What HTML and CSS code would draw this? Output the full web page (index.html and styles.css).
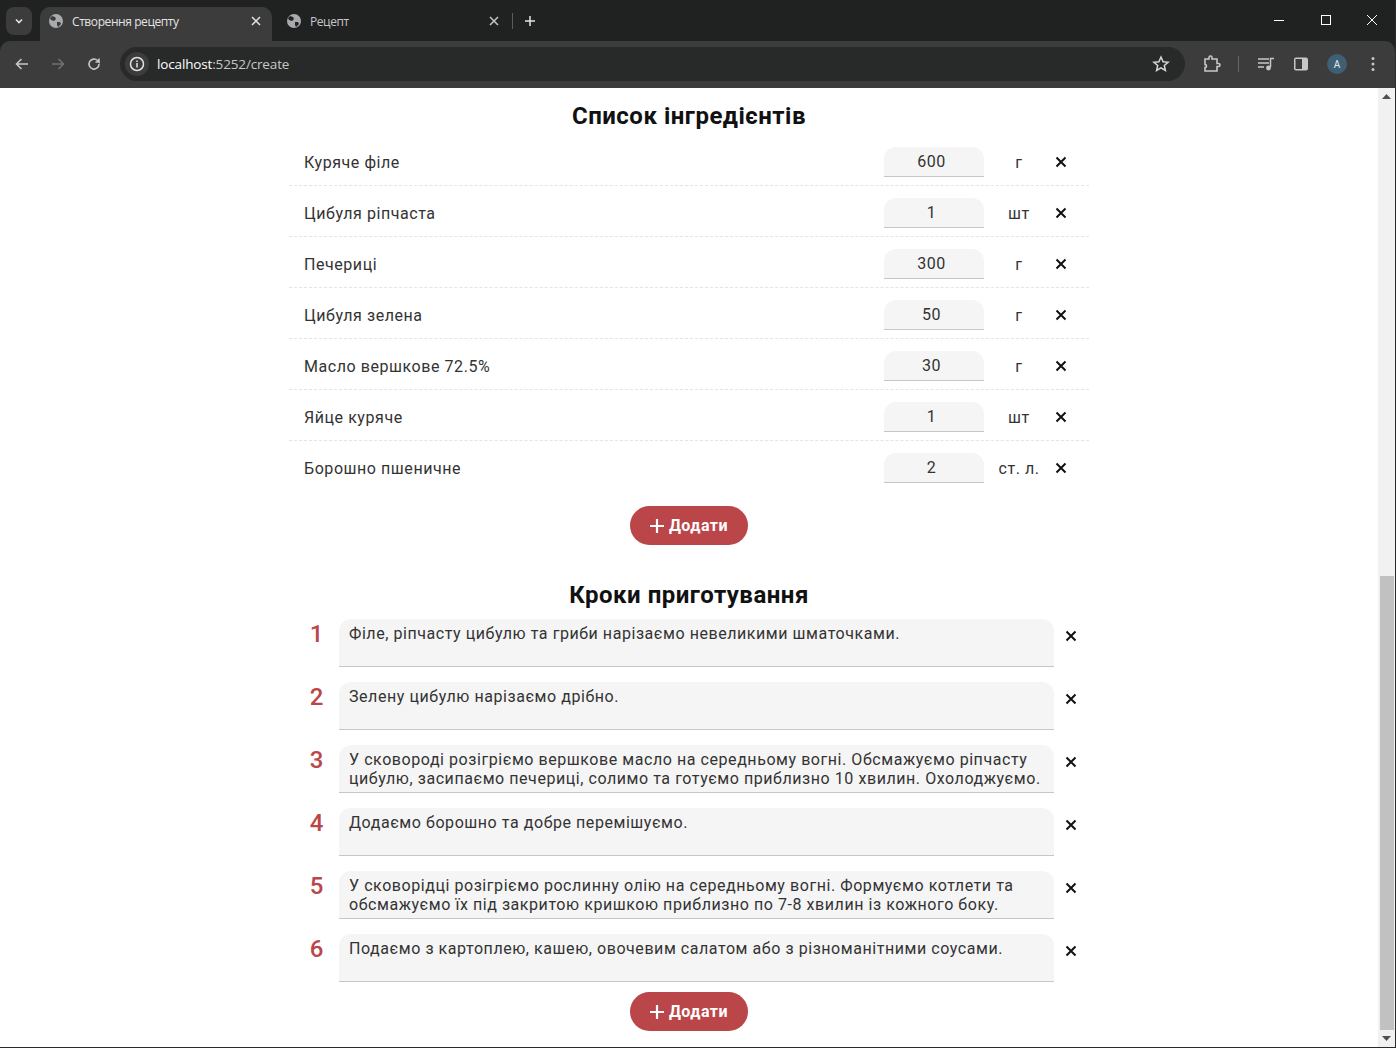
FILE: index.html
```html
<!DOCTYPE html>
<html lang="uk">
<head>
<meta charset="utf-8">
<title>Створення рецепту</title>
<link rel="stylesheet" href="styles.css">
</head>
<body>
<header class="chrome">
  <div class="tabstrip">
    <div class="tabsearch"><svg width="12" height="12" viewBox="0 0 12 12"><path d="M3 4.500l3 3 3-3" fill="none" stroke="#e3e3e3" stroke-width="1.600"/></svg></div>
    <div class="tab tab-active">
      <svg class="globe" width="16" height="16" viewBox="0 0 16 16"><circle cx="8" cy="8" r="7" fill="#a8abae"/><path d="M4 3l3 1 1 2-2 2-3-1-1-2zM9 9l3 0 1 2-3 3-1-2z" fill="#3c3c3c"/></svg>
      <span class="tab-title">Створення рецепту</span>
      <svg class="tab-x" width="10" height="10" viewBox="0 0 10 10"><path d="M1 1l8 8M9 1l-8 8" stroke="#e3e3e3" stroke-width="1.500"/></svg>
    </div>
    <div class="tab tab-idle">
      <svg class="globe" width="16" height="16" viewBox="0 0 16 16"><circle cx="8" cy="8" r="7" fill="#a8abae"/><path d="M4 3l3 1 1 2-2 2-3-1-1-2zM9 9l3 0 1 2-3 3-1-2z" fill="#212323"/></svg>
      <span class="tab-title">Рецепт</span>
      <svg class="tab-x" width="10" height="10" viewBox="0 0 10 10"><path d="M1 1l8 8M9 1l-8 8" stroke="#c4c7c5" stroke-width="1.500"/></svg>
    </div>
    <span class="tab-sep"></span>
    <svg class="newtab" width="12" height="12" viewBox="0 0 12 12"><path d="M6 1v10M1 6h10" stroke="#e3e3e3" stroke-width="1.500"/></svg>
    <div class="winctl">
      <svg width="12" height="12" viewBox="0 0 12 12"><path d="M1 6.500h10" stroke="#fff"/></svg>
      <svg width="12" height="12" viewBox="0 0 12 12"><rect x="1.500" y="1.500" width="9" height="9" fill="none" stroke="#fff"/></svg>
      <svg width="12" height="12" viewBox="0 0 12 12"><path d="M1 1l10 10M11 1L1 11" stroke="#fff"/></svg>
    </div>
  </div>
  <div class="toolbar">
    <svg width="16" height="16" viewBox="0 0 16 16"><path d="M14 8H3M7.500 3L2.500 8l5 5" fill="none" stroke="#c7c7c7" stroke-width="1.600"/></svg>
    <svg width="16" height="16" viewBox="0 0 16 16"><path d="M2 8h11M8.500 3l5 5-5 5" fill="none" stroke="#6f7071" stroke-width="1.600"/></svg>
    <svg width="16" height="16" viewBox="0 0 16 16"><path d="M13 8a5 5 0 1 1-1.500-3.500L13 6V2.500M13 6H9.500" fill="none" stroke="#c7c7c7" stroke-width="1.600"/></svg>
    <div class="omnibox">
      <span class="site-info"><svg width="16" height="16" viewBox="0 0 16 16"><circle cx="8" cy="8" r="6.500" fill="none" stroke="#e3e3e3" stroke-width="1.500"/><path d="M8 7v4.500M8 4.500v1.500" stroke="#e3e3e3" stroke-width="1.500"/></svg></span>
      <span class="url"><span class="url-host">localhost</span>:5252/create</span>
      <svg class="star" width="18" height="18" viewBox="0 0 18 18"><path d="M9 2l2.100 4.700 5 .5-3.800 3.300 1.100 5L9 12.900 4.600 15.500l1.100-5L1.900 7.200l5-.5z" fill="none" stroke="#d5d5d5" stroke-width="1.500"/></svg>
    </div>
    <svg class="tb-ext" width="18" height="18" viewBox="0 0 18 18"><path d="M2 4h4V2.500a1.500 1.500 0 0 1 3 0V4h5v4.500h1.500a1.500 1.500 0 0 1 0 3H14V16H2v-3.500a1.500 1.500 0 0 0 0-3V4z" fill="none" stroke="#c7c7c7" stroke-width="1.600"/></svg>
    <span class="tb-sep"></span>
    <svg class="tb-media" width="18" height="14" viewBox="0 0 18 14"><path d="M1 2h11M1 6h11M1 10h6" stroke="#c7c7c7" stroke-width="1.500"/><path d="M13.500 10V1.500H17" fill="none" stroke="#c7c7c7" stroke-width="1.500"/><circle cx="11.500" cy="11" r="2.400" fill="#c7c7c7"/></svg>
    <svg class="tb-panel" width="16" height="16" viewBox="0 0 16 16"><rect x="1" y="1.500" width="14" height="13" rx="2" fill="#c7c7c7"/><rect x="2.500" y="3" width="6.500" height="10" fill="#3c3c3c"/></svg>
    <span class="avatar">A</span>
    <svg class="tb-menu" width="4" height="16" viewBox="0 0 4 16"><circle cx="2" cy="2.500" r="1.500" fill="#c7c7c7"/><circle cx="2" cy="8" r="1.500" fill="#c7c7c7"/><circle cx="2" cy="13.500" r="1.500" fill="#c7c7c7"/></svg>
  </div>
</header>

<div class="viewport">
  <main class="page">
    <section class="ingredients">
      <h2 class="section-title">Список інгредієнтів</h2>
      <ul class="ing-list">
        <li class="ing-row"><span class="ing-name">Куряче філе</span><span class="qty">600</span><span class="unit">г</span><svg class="remove" width="12" height="12" viewBox="0 0 12 12"><path d="M1.500 1.500l9 9M10.500 1.500l-9 9"/></svg></li>
        <li class="ing-row"><span class="ing-name">Цибуля ріпчаста</span><span class="qty">1</span><span class="unit">шт</span><svg class="remove" width="12" height="12" viewBox="0 0 12 12"><path d="M1.500 1.500l9 9M10.500 1.500l-9 9"/></svg></li>
        <li class="ing-row"><span class="ing-name">Печериці</span><span class="qty">300</span><span class="unit">г</span><svg class="remove" width="12" height="12" viewBox="0 0 12 12"><path d="M1.500 1.500l9 9M10.500 1.500l-9 9"/></svg></li>
        <li class="ing-row"><span class="ing-name">Цибуля зелена</span><span class="qty">50</span><span class="unit">г</span><svg class="remove" width="12" height="12" viewBox="0 0 12 12"><path d="M1.500 1.500l9 9M10.500 1.500l-9 9"/></svg></li>
        <li class="ing-row"><span class="ing-name">Масло вершкове 72.5%</span><span class="qty">30</span><span class="unit">г</span><svg class="remove" width="12" height="12" viewBox="0 0 12 12"><path d="M1.500 1.500l9 9M10.500 1.500l-9 9"/></svg></li>
        <li class="ing-row"><span class="ing-name">Яйце куряче</span><span class="qty">1</span><span class="unit">шт</span><svg class="remove" width="12" height="12" viewBox="0 0 12 12"><path d="M1.500 1.500l9 9M10.500 1.500l-9 9"/></svg></li>
        <li class="ing-row ing-last"><span class="ing-name">Борошно пшеничне</span><span class="qty">2</span><span class="unit">ст. л.</span><svg class="remove" width="12" height="12" viewBox="0 0 12 12"><path d="M1.500 1.500l9 9M10.500 1.500l-9 9"/></svg></li>
      </ul>
      <button class="add-btn"><svg width="14" height="14" viewBox="0 0 14 14"><path d="M7 0v14M0 7h14" stroke="#fff" stroke-width="2.200"/></svg>Додати</button>
    </section>

    <section class="steps">
      <h2 class="section-title">Кроки приготування</h2>
      <ol class="step-list">
        <li class="step"><span class="step-num">1</span><div class="step-text">Філе, ріпчасту цибулю та гриби нарізаємо невеликими шматочками.</div><svg class="remove" width="12" height="12" viewBox="0 0 12 12"><path d="M1.500 1.500l9 9M10.500 1.500l-9 9"/></svg></li>
        <li class="step"><span class="step-num">2</span><div class="step-text">Зелену цибулю нарізаємо дрібно.</div><svg class="remove" width="12" height="12" viewBox="0 0 12 12"><path d="M1.500 1.500l9 9M10.500 1.500l-9 9"/></svg></li>
        <li class="step"><span class="step-num">3</span><div class="step-text">У сковороді розігріємо вершкове масло на середньому вогні. Обсмажуємо ріпчасту цибулю, засипаємо печериці, солимо та готуємо приблизно 10 хвилин. Охолоджуємо.</div><svg class="remove" width="12" height="12" viewBox="0 0 12 12"><path d="M1.500 1.500l9 9M10.500 1.500l-9 9"/></svg></li>
        <li class="step"><span class="step-num">4</span><div class="step-text">Додаємо борошно та добре перемішуємо.</div><svg class="remove" width="12" height="12" viewBox="0 0 12 12"><path d="M1.500 1.500l9 9M10.500 1.500l-9 9"/></svg></li>
        <li class="step"><span class="step-num">5</span><div class="step-text">У сковорідці розігріємо рослинну олію на середньому вогні. Формуємо котлети та обсмажуємо їх під закритою кришкою приблизно по 7-8 хвилин із кожного боку.</div><svg class="remove" width="12" height="12" viewBox="0 0 12 12"><path d="M1.500 1.500l9 9M10.500 1.500l-9 9"/></svg></li>
        <li class="step"><span class="step-num">6</span><div class="step-text">Подаємо з картоплею, кашею, овочевим салатом або з різноманітними соусами.</div><svg class="remove" width="12" height="12" viewBox="0 0 12 12"><path d="M1.500 1.500l9 9M10.500 1.500l-9 9"/></svg></li>
      </ol>
      <button class="add-btn"><svg width="14" height="14" viewBox="0 0 14 14"><path d="M7 0v14M0 7h14" stroke="#fff" stroke-width="2.200"/></svg>Додати</button>
    </section>
  </main>
  <aside class="scrollbar">
    <svg class="sb-arrow" width="9" height="5" viewBox="0 0 9 5"><path d="M4.500 0L9 5H0z" fill="#505050"/></svg>
    <div class="sb-space"></div>
    <div class="sb-thumb"></div>
    <svg class="sb-arrow" width="9" height="5" viewBox="0 0 9 5"><path d="M0 0h9L4.500 5z" fill="#505050"/></svg>
  </aside>
</div>
</body>
</html>
```

FILE: styles.css
```css
* { box-sizing: border-box; }
html, body { margin: 0; padding: 0; height: 1048px; overflow: hidden; background: #fff; }
body { display: flex; flex-direction: column; font-family: Roboto, "Liberation Sans", sans-serif; color: #333; border-right: 1px solid #2b2b2b; border-bottom: 1px solid #2b2b2b; }
ul, ol { list-style: none; margin: 0; padding: 0; }

/* browser chrome */
.chrome { height: 88px; flex: none; display: flex; flex-direction: column; background: #202222; }
.tabstrip { height: 41px; flex: none; display: flex; align-items: flex-start; padding: 7px 0 0 6px; position: relative; }
.tabsearch { width: 26px; height: 28px; background: #3c3c3c; border-radius: 8px; display: flex; align-items: center; justify-content: center; margin-right: 8px; }
.tab { width: 232px; height: 34px; display: flex; align-items: center; padding: 0 11px 6px 8px; font: 12px "Open Sans", "Noto Sans", sans-serif; color: #e3e3e3; border-radius: 10px 10px 0 0; }
.tab-active { background: #3c3c3c; }
.tab-idle { width: 238px; padding-left: 14px; color: #c7c7c7; }
.globe { flex: none; margin-right: 8px; }
.tab-title { flex: 1; white-space: nowrap; letter-spacing: -0.42px; }
.tab-sep { width: 1px; height: 16px; background: #5a5b5b; margin: 6px 11px 0 2px; }
.newtab { margin-top: 8px; }
.winctl { margin-left: auto; display: flex; gap: 34px; padding: 7px 17px 0 0; }
.winctl svg:first-child { margin-right: 1px; }
.toolbar { height: 47px; flex: none; display: flex; align-items: center; background: #3c3c3c; border-radius: 10px 10px 0 0; padding: 0 0 1px 14px; gap: 20px; }
.omnibox { width: 1065px; height: 34px; margin-left: -2px; background: #282a2a; border-radius: 17px; display: flex; align-items: center; padding: 0 15px 0 5px; color: #c7c7c7; font: 13.500px "Open Sans", "Noto Sans", sans-serif; }
.site-info { width: 24px; height: 24px; background: #3c3c3c; border-radius: 50%; display: flex; align-items: center; justify-content: center; margin-right: 8px; }
.url { flex: 1; letter-spacing: -0.15px; }
.url-host { color: #fff; }
.tb-ext { margin-left: -2px; }
.tb-sep { width: 1px; height: 16px; background: #666; margin: 0 0 0 -3px; }
.tb-media { margin-left: -2px; }
.tb-panel { margin-left: -2px; }
.avatar { width: 20px; height: 20px; margin-left: -2px; border-radius: 50%; background: #3f5f75; color: #e8edf0; font: 10px Roboto, sans-serif; display: flex; align-items: center; justify-content: center; }
.tb-menu { margin-left: 4px; }

/* page */
.viewport { flex: 1; min-height: 0; display: flex; }
.page { flex: 1; min-width: 0; display: flex; flex-direction: column; align-items: center; letter-spacing: 0.56px; font-size: 16px; padding-top: 12px; }
.ingredients, .steps { width: 800px; display: flex; flex-direction: column; align-items: center; }
.steps { margin-top: 34px; }
.section-title { margin: 0; font-size: 24px; line-height: 32px; font-weight: 700; color: #111; text-align: center; letter-spacing: 0.5px; }
.ing-list { width: 100%; margin-top: 3px; }
.ing-row { height: 51px; display: flex; align-items: center; padding: 5px 15px 0; border-bottom: 1px dashed #e4e4e4; }
.ing-last { border-bottom-color: transparent; }
.ing-name { flex: 1; }
.qty { width: 100px; height: 30px; margin-top: -2px; background: #f5f5f5; border-bottom: 1px solid #c6c6c6; border-radius: 12px 12px 0 0; text-align: center; line-height: 30px; padding-right: 5px; }
.unit { width: 70px; text-align: center; }
.ing-row .remove { margin: -2px 7px 0 1px; }
.remove { flex: none; }
.remove path { fill: none; stroke: #111; stroke-width: 2; }
.add-btn { width: 118px; height: 39px; margin-top: 14px; border: none; border-radius: 20px; background: #bb4649; color: #fff; font: 700 16px Roboto, sans-serif; letter-spacing: 0.5px; display: flex; align-items: center; justify-content: center; gap: 5px; padding: 0; }
.step-list { width: 100%; margin-top: 8px; }
.step { height: 48px; display: flex; align-items: flex-start; margin-bottom: 15px; }
.step:last-child { margin-bottom: 0; }
.step-num { width: 50px; padding: 1px 0 0 5px; text-align: center; font-size: 24px; font-weight: 500; line-height: 28px; color: #bb4649; letter-spacing: 0; }
.step-text { width: 715px; height: 48px; background: #f5f5f5; border-bottom: 1px solid #c6c6c6; border-radius: 12px 12px 0 0; padding: 5px 10px 0; line-height: 19px; }
.step .remove { margin: 11px 0 0 11px; }
.steps .add-btn { margin-top: 10px; }

/* scrollbar */
.scrollbar { width: 17px; flex: none; background: #f1f1f1; display: flex; flex-direction: column; align-items: center; }
.sb-arrow { flex: none; margin: 6px 0; }
.sb-space { height: 471px; flex: none; }
.sb-thumb { flex: 1; width: 14px; background: #c1c1c1; }
```
